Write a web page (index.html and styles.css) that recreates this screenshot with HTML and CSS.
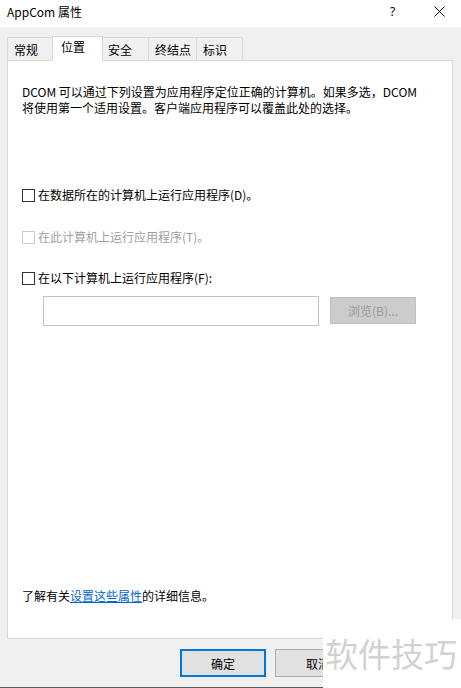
FILE: index.html
```html
<!DOCTYPE html>
<html lang="zh-CN">
<head>
<meta charset="utf-8">
<title>AppCom 属性</title>
<link rel="stylesheet" href="styles.css">
</head>
<body>
<div class="window">
  <div class="titlebar">
    <span class="title">AppCom 属性</span>
    <span class="help">?</span>
    <span class="close">
      <svg width="11" height="11" viewBox="0 0 11 11"><path d="M0.5 0.5 L10.5 10.5 M10.5 0.5 L0.5 10.5" stroke="#000" stroke-width="1" fill="none"/></svg>
    </span>
  </div>
  <div class="body">
    <div class="tabs">
      <div class="tab">常规</div>
      <div class="tab active">位置</div>
      <div class="tab">安全</div>
      <div class="tab">终结点</div>
      <div class="tab">标识</div>
    </div>
    <div class="panel">
      <p class="desc">DCOM 可以通过下列设置为应用程序定位正确的计算机。如果多选，DCOM 将使用第一个适用设置。客户端应用程序可以覆盖此处的选择。</p>
      <label class="check row1"><span class="box"></span>在数据所在的计算机上运行应用程序(D)。</label>
      <label class="check row2 disabled"><span class="box"></span>在此计算机上运行应用程序(T)。</label>
      <label class="check row3"><span class="box"></span>在以下计算机上运行应用程序(F):</label>
      <div class="remote">
        <div class="input"></div>
        <div class="browse">浏览(B)...</div>
      </div>
      <p class="more">了解有关<a class="link">设置这些属性</a>的详细信息。</p>
    </div>
    <div class="buttons">
      <div class="btn primary">确定</div>
      <div class="btn">取消</div>
    </div>
  </div>
  <div class="bottomline"></div>
  <div class="watermark">软件技巧</div>
</div>
</body>
</html>
```

FILE: styles.css
```css
* { box-sizing: border-box; }
html, body {
  margin: 0;
  padding: 0;
  background: #f0f0f0;
}
body {
  font-family: "Noto Sans CJK SC", "Noto Sans", sans-serif;
  font-size: 12px;
  color: #000;
}
.window {
  position: relative;
  width: 461px;
  height: 688px;
  display: flex;
  flex-direction: column;
  background: #f0f0f0;
  overflow: hidden;
}
.titlebar {
  height: 27px;
  background: #fff;
  display: flex;
  align-items: center;
  padding-left: 7px;
  line-height: 16px;
}
.title {
  flex: 1;
  margin-top: -3px;
}
.help {
  width: 10px;
  margin-right: 34px;
  margin-top: -3px;
  font-family: "Noto Sans", sans-serif;
}
.close {
  width: 11px;
  height: 11px;
  margin-right: 16px;
  margin-top: -5px;
  display: flex;
}
.body {
  flex: 1;
  display: flex;
  flex-direction: column;
  padding: 0 8px 0 7px;
}
.tabs {
  display: flex;
  align-items: flex-end;
  height: 34px;
  position: relative;
  z-index: 1;
  margin-bottom: -1px;
}
.tab {
  min-width: 47px;
  height: 23px;
  padding: 1px 5px 0 6px;
  border: 1px solid #d9d9d9;
  border-bottom: none;
  border-right: none;
  background: #f0f0f0;
  line-height: 21px;
  margin-bottom: 1px;
}
.tab:nth-child(5) { border-right: 1px solid #d9d9d9; }
.tab.active {
  min-width: 51px;
  height: 25px;
  padding: 0 5px 0 8px;
  background: #fff;
  margin: 0 -2px;
  position: relative;
  z-index: 2;
  border-right: 1px solid #d9d9d9;
  line-height: 20px;
}
.panel {
  height: 579px;
  background: #fff;
  border: 1px solid #d9d9d9;
  display: flex;
  flex-direction: column;
  padding: 23px 24px 34px 14px;
}
.desc {
  margin: 0;
  line-height: 16px;
}
.check {
  display: flex;
  align-items: center;
  line-height: 16px;
  height: 16px;
  white-space: nowrap;
}
.box {
  width: 13px;
  height: 13px;
  border: 1px solid #333;
  margin-right: 3px;
  background: #fff;
}
.row1 { margin-top: 71px; }
.row2 { margin-top: 26px; }
.row3 { margin-top: 25px; }
.disabled { color: #a0a0a0; }
.disabled .box { border-color: #cccccc; }
.remote {
  display: flex;
  align-items: flex-start;
  margin-top: 10px;
  padding-left: 21px;
}
.input {
  width: 276px;
  height: 30px;
  border: 1px solid #c4c4c4;
  background: #fff;
  flex-shrink: 0;
}
.browse {
  margin-left: 11px;
  margin-top: 1px;
  width: 86px;
  height: 27px;
  flex-shrink: 0;
  background: #cccccc;
  border: 1px solid #bfbfbf;
  color: #9a9a9a;
  display: flex;
  align-items: center;
  justify-content: center;
}
.more {
  margin: auto 0 0 0;
  line-height: 16px;
}
.link {
  color: #0066cc;
  text-decoration: underline;
}
.buttons {
  display: flex;
  gap: 9px;
  margin-left: 173px;
  margin-top: 10px;
}
.btn {
  width: 86px;
  height: 28px;
  flex-shrink: 0;
  background: #e1e1e1;
  border: 1px solid #adadad;
  display: flex;
  align-items: center;
  justify-content: center;
}
.btn.primary {
  border: 2px solid #0078d7;
}
.bottomline {
  height: 1px;
  background: #5a5a5a;
}
.watermark {
  position: absolute;
  left: 323px;
  top: 619px;
  width: 138px;
  height: 69px;
  background: #fff;
  color: #d2d2d2;
  font-size: 33px;
  line-height: 69px;
  padding-left: 2px;
  white-space: nowrap;
}
```
